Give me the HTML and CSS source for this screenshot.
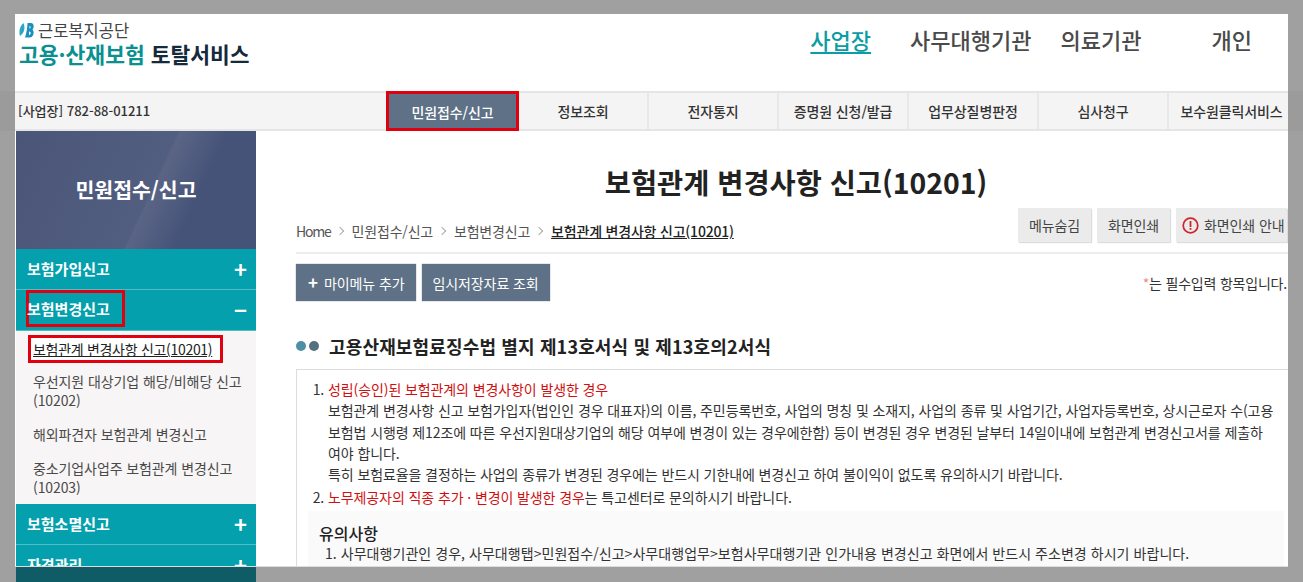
FILE: index.html
```html
<!DOCTYPE html>
<html lang="ko">
<head>
<meta charset="utf-8">
<title>고용·산재보험 토탈서비스</title>
<link rel="stylesheet" href="styles.css">
</head>
<body>
<div class="under-band"></div>
<div class="under-strip"></div>
<div class="window">
  <header class="top">
    <div class="logo">
      <div class="org"><svg class="org-mark" width="15" height="16" viewBox="0 0 15 16"><path d="M1 14C-.5 9 1 4 4.500 1 6.500 6 5.500 11 1 14z" fill="#2aa5c8"/><path fill-rule="evenodd" d="M6 15.500C7.500 11 8.500 5 8.500 1H12c3 0 3.500 4.500 1.500 6.500 2 2 1.500 7.500-2.500 8zM10.500 4v2.500c1.500 0 1.500-2.500 0-2.500zM10 9.500V13c2 0 2.500-3.500 0-3.500z" fill="#1b8fbd"/></svg><span>근로복지공단</span></div>
      <div class="brand"><em>고용·산재보험</em> 토탈서비스</div>
    </div>
    <nav class="roles">
      <a class="role role-on">사업장</a>
      <a class="role role-b">사무대행기관</a>
      <a class="role role-c">의료기관</a>
      <a class="role role-d">개인</a>
    </nav>
  </header>
  <div class="gnb">
    <div class="biz">[사업장] 782-88-01211</div>
    <ul class="gnb-list">
      <li class="gnb-item gnb-on">민원접수/신고</li>
      <li class="gnb-item gnb-next">정보조회</li>
      <li class="gnb-item">전자통지</li>
      <li class="gnb-item">증명원 신청/발급</li>
      <li class="gnb-item">업무상질병판정</li>
      <li class="gnb-item">심사청구</li>
      <li class="gnb-item gnb-last">보수원클릭서비스</li>
    </ul>
  </div>
  <div class="body">
    <aside class="side">
      <div class="side-head">민원접수/신고</div>
      <div class="side-group">보험가입신고<span class="sign">+</span></div>
      <div class="side-group"><span class="mark-box">보험변경신고</span><span class="sign">−</span></div>
      <ul class="side-sub">
        <li class="sub-item sub-first"><a class="sub-on">보험관계 변경사항 신고(10201)</a></li>
        <li class="sub-item">우선지원 대상기업 해당/비해당 신고(10202)</li>
        <li class="sub-item">해외파견자 보험관계 변경신고</li>
        <li class="sub-item">중소기업사업주 보험관계 변경신고(10203)</li>
      </ul>
      <div class="side-group">보험소멸신고<span class="sign">+</span></div>
      <div class="side-group">자격관리<span class="sign">+</span></div>
    </aside>
    <main class="main">
      <h1 class="title">보험관계 변경사항 신고(10201)</h1>
      <div class="crumb-row">
        <div class="crumbs">
          <span class="home">Home</span><i class="chev"></i><span>민원접수/신고</span><i class="chev"></i><span>보험변경신고</span><i class="chev"></i><b>보험관계 변경사항 신고(10201)</b>
        </div>
        <div class="tools">
          <button class="tool">메뉴숨김</button>
          <button class="tool">화면인쇄</button>
          <button class="tool tool-info"><svg width="17" height="17" viewBox="0 0 17 17"><circle cx="8.500" cy="8.500" r="7.300" fill="none" stroke="#d0242b" stroke-width="1.700"/><rect x="7.600" y="4" width="1.800" height="6" fill="#d0242b"/><rect x="7.600" y="11" width="1.800" height="1.800" fill="#d0242b"/></svg>화면인쇄 안내</button>
        </div>
      </div>
      <div class="action-row">
        <button class="act"><span class="act-plus">+</span>마이메뉴 추가</button>
        <button class="act">임시저장자료 조회</button>
        <div class="req"><span class="star">*</span>는 필수입력 항목입니다.</div>
      </div>
      <h2 class="sect"><i class="dot dot-a"></i><i class="dot dot-b"></i>고용산재보험료징수법 별지 제13호서식 및 제13호의2서식</h2>
      <section class="box">
        <ol class="notes">
          <li><span class="red">성립(승인)된 보험관계의 변경사항이 발생한 경우</span><br>보험관계 변경사항 신고 보험가입자(법인인 경우 대표자)의 이름, 주민등록번호, 사업의 명칭 및 소재지, 사업의 종류 및 사업기간, 사업자등록번호, 상시근로자 수(고용<br>보험법 시행령 제12조에 따른 우선지원대상기업의 해당 여부에 변경이 있는 경우에한함) 등이 변경된 경우 변경된 날부터 14일이내에 보험관계 변경신고서를 제출하<br>여야 합니다.<br>특히 보험료율을 결정하는 사업의 종류가 변경된 경우에는 반드시 기한내에 변경신고 하여 불이익이 없도록 유의하시기 바랍니다.</li>
          <li><span class="red">노무제공자의 직종 추가 · 변경이 발생한 경우</span>는 특고센터로 문의하시기 바랍니다.</li>
        </ol>
        <div class="caution">
          <h3 class="caution-title">유의사항</h3>
          <p class="caution-text">1. 사무대행기관인 경우, 사무대행탭&gt;민원접수/신고&gt;사무대행업무&gt;보험사무대행기관 인가내용 변경신고 화면에서 반드시 주소변경 하시기 바랍니다.</p>
        </div>
      </section>
    </main>
  </div>
</div>
</body>
</html>
```
FILE: styles.css
```css
* { box-sizing: border-box; }
html, body { margin: 0; height: 582px; overflow: hidden; }
body {
  background: #a0a0a0;
  padding: 14px 15px;
  font-family: "Noto Sans CJK KR", "Noto Sans", sans-serif;
  color: #333;
  position: relative;
}
.under-band { position: absolute; left: 0; top: 91px; width: 100%; height: 40px; background: #9b9b9b; }
.under-strip {
  position: absolute; left: 16px; top: 560px; width: 240px; height: 22px;
  background: #0f5c66;
}
.window {
  position: relative;
  width: 1273px; height: 553px;
  background: #fff;
  overflow: hidden;
  border-bottom: 1px solid #ddd;
}
.top { height: 77px; display: flex; justify-content: space-between; }
.logo { padding: 7px 0 0 4px; }
.org { display: flex; align-items: center; gap: 4px; height: 18px; font-size: 16.500px; color: #444; }
.org-mark { display: block; }
.brand { font-size: 21.500px; line-height: 24px; font-weight: 700; color: #152a3a; margin-top: 3px; white-space: nowrap; }
.brand em { font-style: normal; color: #0a9090; }
.roles { display: flex; align-items: flex-start; padding-top: 9px; font-size: 22px; line-height: 32px; color: #4a4a4a; font-weight: 500; white-space: nowrap; }
.role { display: block; }
.role-on { color: #0c9ca5; text-decoration: underline; text-underline-offset: 3px; }
.role-b { margin-left: 39px; }
.role-c { margin-left: 29px; }
.role-d { margin-left: 70px; margin-right: 36px; }
.gnb {
  height: 40px; display: flex; justify-content: space-between;
  background: #f4f4f4; border-top: 2px solid #e5e5e5; border-bottom: 2px solid #e5e5e5;
}
.biz { padding-left: 3px; font-size: 13px; line-height: 36px; color: #333; font-weight: 500; }
.gnb-list { display: flex; margin: 0; padding: 0; list-style: none; }
.gnb-item {
  width: 130px; text-align: center; font-size: 14px; letter-spacing: -0.1px; line-height: 36px; font-weight: 500;
  border-left: 2px solid #e8e8e8; white-space: nowrap; color: #333;
}
.gnb-on { position: relative; width: 133px; margin-top: -2px; height: 40px; line-height: 36px; background: #5e7186; color: #fff; border: 3px solid #e0000f; }
.gnb-next { width: 128px; border-left: 0; }
.gnb-last { width: 121px; padding-left: 6px; }
.body { display: flex; height: 436px; }
.side { width: 240px; margin-left: 1px; flex: none; }
.side-head {
  height: 118px; padding-bottom: 3px; display: flex; align-items: center; justify-content: center;
  font-size: 20.500px; font-weight: 700; color: #fff;
  background: linear-gradient(115deg, #4a5578 0%, #525e80 55%, #5a6585 56%, #465379 72%, #465379 100%);
}
.side-group {
  position: relative; height: 41px; padding-left: 11px; background: #05a0ae;
  color: #fff; font-size: 15px; line-height: 39px; font-weight: 700;
  border-bottom: 1px solid #52bcc6;
}
.sign { position: absolute; right: 9px; top: 0; font-size: 22px; font-weight: 700; line-height: 38px; }
.mark-box { position: absolute; left: 10px; top: 0; height: 37px; width: 99px; padding-left: 1px; box-shadow: inset 0 0 0 3px #e0000f; line-height: 38px; white-space: nowrap; }
.side-sub { margin: 0; padding: 4px 0 0; list-style: none; background: #f7f5f5; height: 173px; }
.sub-item { margin: 0 0 15px 17px; width: 218px; font-size: 14px; letter-spacing: -0.1px; line-height: 19px; color: #4a4a4a; }
.sub-first { margin-bottom: 9px; }
.sub-on { display: inline-block; margin-left: -5px; padding: 0 8px 0 2px; border: 3px solid #e0000f; background: #fff; color: #222; text-decoration: underline; letter-spacing: -0.3px; line-height: 22px; height: 28px; white-space: nowrap; }
.main { flex: 1; min-width: 0; padding: 0 0 0 40px; }
.title { margin: 0; height: 82px; padding-top: 31px; padding-left: 8px; text-align: center; font-size: 28.400px; line-height: 40px; font-weight: 700; color: #222; }
.crumb-row { display: flex; justify-content: space-between; align-items: flex-start; height: 41px; border-bottom: 2px solid #ececec; }
.crumbs { display: flex; align-items: center; gap: 9px; height: 34px; padding-top: 2px; font-size: 14px; letter-spacing: -0.2px; color: #555; white-space: nowrap; }
.home { letter-spacing: -1.200px; }
.crumbs b { font-weight: 500; color: #222; text-decoration: underline; }
.chev { display: block; width: 6px; height: 6px; margin-left: -3px; border-top: 1px solid #aaa; border-right: 1px solid #aaa; transform: rotate(45deg); }
.tools { display: flex; gap: 6px; margin-top: -5px; margin-right: 1px; }
.tool { width: 73px; height: 34px; padding: 0; justify-content: center; border: 0; background: #ebebeb; font: inherit; font-size: 14px; letter-spacing: -0.1px; color: #444; display: flex; align-items: center; box-shadow: 1px 1px 1px #ddd; white-space: nowrap; }
.tool-info { gap: 5px; width: 111px; justify-content: flex-start; padding-left: 6px; }
.action-row { display: flex; align-items: center; gap: 6px; height: 37px; margin-top: 10px; }
.act { height: 37px; padding: 0 11px; border: 0; background: #5e7186; color: #fff; font: inherit; font-size: 14px; letter-spacing: -0.1px; white-space: nowrap; box-shadow: 0 0 1px #5e7186; }
.act-plus { display: inline-block; width: 17px; font-size: 17px; line-height: 20px; font-weight: 700; text-align: left; padding-left: 1px; }
.req { margin-left: auto; margin-right: 1px; font-size: 14px; letter-spacing: -0.2px; color: #333; white-space: nowrap; }
.star { color: #e88; }
.sect { display: flex; align-items: center; margin: 33px 0 0; height: 24px; font-size: 18px; letter-spacing: 0.150px; font-weight: 700; color: #222; white-space: nowrap; }
.dot { display: block; width: 10px; height: 10px; border-radius: 50%; margin-right: 3px; }
.dot-a { background: #4e8fa5; }
.dot-b { background: #57707f; margin-right: 10px; }
.box { margin-top: 11px; height: 230px; border: 1px solid #ddd; border-right: 0; border-bottom: 0; padding: 9px 0 0 0; width: 992px; }
.notes { margin: 0; padding: 0 0 0 31px; font-size: 14px; letter-spacing: -0.1px; line-height: 21.250px; color: #333; width: 985px; }
.notes li + li { margin-top: 2px; }
.red { color: #d01010; }
.caution { margin: 2px 4px 0 11px; background: #fafafa; padding: 10px 0 0 11px; height: 60px; }
.caution-title { margin: 0; font-size: 16px; line-height: 24px; font-weight: 500; color: #222; }
.caution-text { margin: 0; padding-left: 6px; font-size: 14px; letter-spacing: 0.050px; line-height: 16px; color: #333; white-space: nowrap; }
```
